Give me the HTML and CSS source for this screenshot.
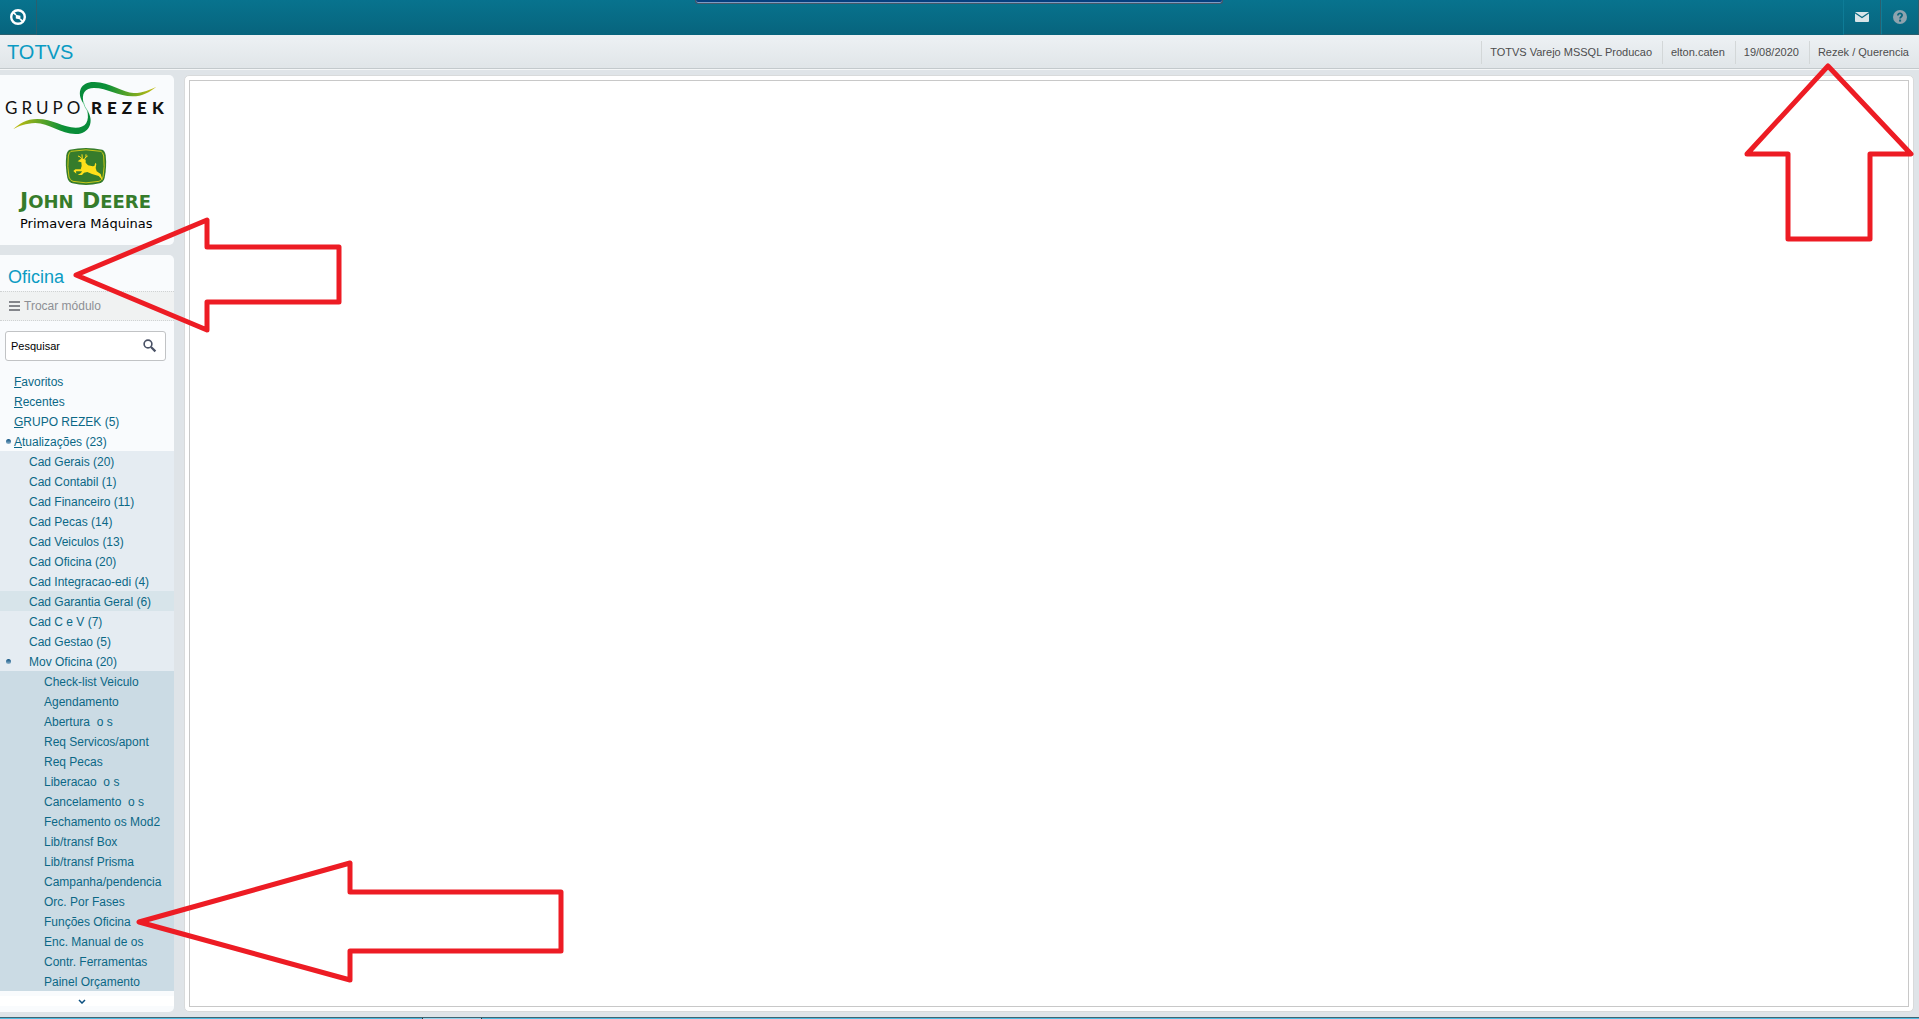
FILE: index.html
```html
<!DOCTYPE html>
<html lang="pt-br">
<head>
    <meta charset="UTF-8">
    <meta name="viewport" content="width=device-width, initial-scale=1.0">
    <title>TOTVS - Oficina</title>
    <link rel="stylesheet" href="styles.css">
</head>
<body>
    <header class="topbar">
        <button class="top-btn top-btn-home" aria-label="Menu">
            <svg width="16" height="16" viewBox="0 0 16 16">
                <circle cx="8" cy="8" r="6.8" fill="none" stroke="#fff" stroke-width="2.4"/>
                <path d="M5.8 5.8 L10.4 6.8 L10.4 10.4 L5.8 9.4 Z" fill="#fff"/>
                <path d="M3.4 3.6 L6 5.8 M10.2 10.2 L12.6 12.4" stroke="#fff" stroke-width="1.6"/>
            </svg>
        </button>
        <div class="remote-tab"></div>
        <div class="top-actions">
            <button class="top-btn" aria-label="Mensagens">
                <svg width="14" height="10" viewBox="0 0 14 10">
                    <rect width="14" height="10" rx="1" fill="#d9e4e8"/>
                    <path d="M0 .8 L7 5.6 L14 .8" fill="none" stroke="#0a6a83" stroke-width="1.2"/>
                </svg>
            </button>
            <button class="top-btn" aria-label="Ajuda">
                <svg width="14" height="14" viewBox="0 0 14 14">
                    <circle cx="7" cy="7" r="7" fill="#8fa3ae"/>
                    <path d="M4.9 5.4 C4.9 2.6 9.2 2.8 9.1 5.3 C9.1 6.7 7.1 6.8 7.1 8.6" fill="none" stroke="#0a667e" stroke-width="1.8"/>
                    <rect x="6.1" y="9.6" width="2" height="2" fill="#0a667e"/>
                </svg>
            </button>
        </div>
    </header>

    <div class="titlebar">
        <h1>TOTVS</h1>
        <ul class="session">
            <li>TOTVS Varejo MSSQL Producao</li>
            <li>elton.caten</li>
            <li>19/08/2020</li>
            <li>Rezek / Querencia</li>
        </ul>
    </div>

    <div class="page">
        <aside class="sidebar">
            <div class="panel logo-panel">
                <svg width="174" height="170" viewBox="0 0 174 170">
                    <defs>
                        <linearGradient id="ribbonTop" x1="0" x2="1">
                            <stop offset="0" stop-color="#078a3b"/>
                            <stop offset=".35" stop-color="#0b9038"/>
                            <stop offset="1" stop-color="#c9bd10"/>
                        </linearGradient>
                        <linearGradient id="ribbonBottom" x1="0" x2="1">
                            <stop offset="0" stop-color="#c9bd10"/>
                            <stop offset=".65" stop-color="#0b9038"/>
                            <stop offset="1" stop-color="#078a3b"/>
                        </linearGradient>
                    </defs>
                    <text class="logo-grupo" x="5" y="39">GRUPO</text>
                    <text class="logo-rezek" x="91" y="39">REZEK</text>
                    <!-- ribbons and deer are drawn on a grid of thirds -->
                    <g transform="scale(.33333) translate(0 -225)">
                        <path d="M252 313 C226 276 244 246 280 246 C325 244 372 280 402 279 C430 279 450 269 469 260 C449 276 428 289 397 289 C356 289 322 264 282 264 C256 264 242 280 252 313 Z" fill="url(#ribbonTop)"/>
                        <path d="M261 329 C284 363 270 401 228 402 C184 403 147 369 106 369 C77 370 58 378 40 387 C59 371 78 357 112 357 C158 357 190 383 227 383 C257 383 270 364 261 329 Z" fill="url(#ribbonBottom)"/>
                        <path d="M250 306 Q252 319 264 335" fill="none" stroke="#7ccf9f" stroke-width="3"/>
                        <path d="M209 449 Q258 439 307 449 Q315 452 317 466 Q321 500 314 533 Q311 546 299 550 Q258 560 217 550 Q205 546 202 533 Q195 500 199 466 Q201 452 209 449 Z" fill="#367c2b"/>
                        <path d="M213 454 Q258 445 303 454 Q309 457 311 468 Q315 500 309 531 Q306 541 297 544 Q258 553 219 544 Q210 541 207 531 Q201 500 205 468 Q207 457 213 454 Z" fill="none" stroke="#c9c91a" stroke-width="3"/>
                        <path d="M233 484 L241 478 L250 476 L257 479 L257 488 L264 496 L278 499 L283 498 L286 488 L289 492 L287 504 L290 514 L302 522 L308 541 L296 528 L276 522 L262 516 L252 518 L246 525 L233 525 L243 519 L246 514 L228 514 L229 521 L220 513 L226 508 L242 508 L245 498 L244 487 Z" fill="#ffdf1a"/>
                        <path d="M246 478 L241 471 L234 468 M247 477 L246 463 M253 478 L258 470 L258 463 M257 472 L263 468" fill="none" stroke="#ffdf1a" stroke-width="3"/>
                    </g>
                    <text class="logo-deere" x="20" y="133"><tspan class="cap">J</tspan>OHN</text>
                    <text class="logo-deere" x="82" y="133"><tspan class="cap">D</tspan>EERE</text>
                    <text class="logo-branch" x="20" y="153">Primavera Máquinas</text>
                </svg>
            </div>

            <div class="panel menu-panel">
                <h2>Oficina</h2>
                <button class="switch-module">
                    <svg width="11" height="10" viewBox="0 0 11 10">
                        <path d="M0 1h11M0 5h11M0 9h11" stroke="#84868b" stroke-width="2"/>
                    </svg>
                    Trocar módulo
                </button>
                <div class="search">
                    <input type="text" value="Pesquisar" aria-label="Pesquisar">
                    <svg width="14" height="14" viewBox="0 0 14 14">
                        <circle cx="5" cy="5" r="3.9" fill="none" stroke="#4a5266" stroke-width="1.6"/>
                        <path d="M8 8 L12.4 12.4" stroke="#4a5266" stroke-width="2.2"/>
                    </svg>
                </div>
                <nav>
                    <ul class="menu">
                        <li><a href="#"><u>F</u>avoritos</a></li>
                        <li><a href="#"><u>R</u>ecentes</a></li>
                        <li><a href="#"><u>G</u>RUPO REZEK (5)</a></li>
                        <li>
                            <a href="#" class="open"><u>A</u>tualizações (23)</a>
                            <ul class="submenu">
                                <li><a href="#">Cad Gerais (20)</a></li>
                                <li><a href="#">Cad Contabil (1)</a></li>
                                <li><a href="#">Cad Financeiro (11)</a></li>
                                <li><a href="#">Cad Pecas (14)</a></li>
                                <li><a href="#">Cad Veiculos (13)</a></li>
                                <li><a href="#">Cad Oficina (20)</a></li>
                                <li><a href="#">Cad Integracao-edi (4)</a></li>
                                <li><a href="#" class="active">Cad Garantia Geral (6)</a></li>
                                <li><a href="#">Cad C e V (7)</a></li>
                                <li><a href="#">Cad Gestao (5)</a></li>
                                <li>
                                    <a href="#" class="open">Mov Oficina (20)</a>
                                    <ul class="routines">
                                        <li><a href="#">Check-list Veiculo</a></li>
                                        <li><a href="#">Agendamento</a></li>
                                        <li><a href="#">Abertura&nbsp; o s</a></li>
                                        <li><a href="#">Req Servicos/apont</a></li>
                                        <li><a href="#">Req Pecas</a></li>
                                        <li><a href="#">Liberacao&nbsp; o s</a></li>
                                        <li><a href="#">Cancelamento&nbsp; o s</a></li>
                                        <li><a href="#">Fechamento os Mod2</a></li>
                                        <li><a href="#">Lib/transf Box</a></li>
                                        <li><a href="#">Lib/transf Prisma</a></li>
                                        <li><a href="#">Campanha/pendencia</a></li>
                                        <li><a href="#">Orc. Por Fases</a></li>
                                        <li><a href="#">Funções Oficina</a></li>
                                        <li><a href="#">Enc. Manual de os</a></li>
                                        <li><a href="#">Contr. Ferramentas</a></li>
                                        <li><a href="#">Painel Orçamento</a></li>
                                    </ul>
                                </li>
                            </ul>
                        </li>
                    </ul>
                </nav>
                <button class="scroll-down" aria-label="Mais itens">
                    <svg width="8" height="5" viewBox="0 0 8 5">
                        <path d="M1 1 L4 4 L7 1" fill="none" stroke="#0a4f80" stroke-width="1.5"/>
                    </svg>
                </button>
            </div>
        </aside>

        <main class="workspace">
            <div class="workspace-inner"></div>
        </main>
    </div>

    <footer class="bottombar"><div class="bottom-tab"></div></footer>

    <!-- arrows over the screen -->
    <svg class="arrow arrow-branch" width="172" height="180" viewBox="0 0 172 180">
        <path d="M85 4 L168 92 H127 V177 H45 V92 H4 Z"/>
    </svg>
    <svg class="arrow arrow-module" width="270" height="118" viewBox="0 0 270 118">
        <path d="M4 59 L135 4 V31 H267 V86 H135 V114 Z"/>
    </svg>
    <svg class="arrow arrow-routine" width="430" height="126" viewBox="0 0 430 126">
        <path d="M4 63 L215 4 V33 H426 V92 H215 V121 Z"/>
    </svg>
</body>
</html>
```
FILE: styles.css
```css
* {
    box-sizing: border-box;
}
body {
    margin: 0;
    min-height: 100vh;
    display: flex;
    flex-direction: column;
    position: relative;
    font-family: "Liberation Sans", Arial, sans-serif;
    font-size: 12px;
    background-color: #dfe4e8;
}
h1, h2, ul {
    margin: 0;
    padding: 0;
    font-weight: normal;
}
ul {
    list-style: none;
}
button {
    border: none;
    padding: 0;
    background: none;
    font-family: inherit;
    cursor: pointer;
}

/* top bar */
.topbar {
    display: flex;
    justify-content: space-between;
    height: 35px;
    position: relative;
    background: linear-gradient(#08738e, #07647d);
}
.top-btn {
    width: 38px;
    height: 35px;
    display: flex;
    align-items: center;
    justify-content: center;
    border-left: 1px solid #0e7c97;
    border-right: 1px solid #2b5f6e;
    border-bottom: 1px solid #2b5f6e;
}
.top-btn-home {
    width: 37px;
    border-left: none;
}
.top-actions {
    display: flex;
}
.remote-tab {
    position: absolute;
    top: 0;
    left: 695px;
    right: 696px;
    height: 4px;
    background-color: #06407f;
    border: 1px solid #45596a;
    border-top: none;
    border-radius: 0 0 3px 3px;
    box-shadow: inset 0 -1px 0 #7f9cc4;
}

/* title bar */
.titlebar {
    display: flex;
    justify-content: space-between;
    align-items: center;
    height: 35px;
    padding-left: 7px;
    background: linear-gradient(#edf1f4, #e0e5e8);
    border-bottom: 1px solid #f4f6f7;
    box-shadow: inset 0 -1px 0 #c3c9cc;
}
.titlebar h1 {
    font-size: 20px;
    line-height: 32px;
    color: #0b9bc3;
}
.session {
    display: flex;
    font-size: 11px;
    color: #4d4d4d;
}
.session li {
    padding: 0 10px 0 8px;
    line-height: 23px;
    border-left: 1px solid #d3d7d8;
}

/* content */
.page {
    flex: 1;
    display: flex;
    gap: 10px;
    padding: 5px 5px 5px 0;
}
.sidebar {
    width: 174px;
    flex-shrink: 0;
    display: flex;
    flex-direction: column;
    gap: 10px;
}
.panel {
    background-color: #f9fbfd;
    border-radius: 0 5px 5px 0;
    overflow: hidden;
}
.logo-panel svg {
    display: block;
}
.logo-grupo, .logo-rezek {
    font-family: Lato, sans-serif;
    font-size: 17px;
    letter-spacing: 4px;
    fill: #111;
}
.logo-rezek {
    font-weight: 900;
    letter-spacing: 5px;
}
.logo-deere {
    font-family: "DejaVu Sans", sans-serif;
    font-size: 18px;
    font-weight: bold;
    fill: #367c2b;
}
.logo-deere .cap {
    font-size: 22px;
}
.logo-branch {
    font-family: "DejaVu Sans", Verdana, sans-serif;
    font-size: 13px;
    fill: #000;
}
.menu-panel {
    flex: 1;
}
.menu-panel h2 {
    height: 36px;
    padding: 2px 8px 0;
    font-size: 18px;
    line-height: 40px;
    color: #0b9bc3;
}
.switch-module {
    display: flex;
    align-items: center;
    gap: 4px;
    width: 100%;
    height: 30px;
    padding: 0 9px;
    font-size: 12px;
    color: #8d8f94;
    background-color: #f0f2f2;
    border-top: 1px dotted #cfd2d3;
    border-bottom: 1px dotted #cfd2d3;
}
.search {
    display: flex;
    align-items: center;
    height: 30px;
    margin: 10px 8px 10px 5px;
    padding: 0 8px 0 5px;
    background-color: #fff;
    border: 1px solid #c1c3c5;
    border-radius: 3px;
}
.search input {
    flex: 1;
    min-width: 0;
    padding: 0;
    border: none;
    outline: none;
    background: none;
    font-family: inherit;
    font-size: 11px;
    color: #000;
}
.menu a {
    display: block;
    height: 20px;
    padding-left: 14px;
    line-height: 22px;
    white-space: nowrap;
    color: #0b6886;
    text-decoration: none;
    position: relative;
}
.menu .submenu a {
    padding-left: 29px;
}
.menu .routines a {
    padding-left: 44px;
}
.menu a.active {
    background-color: #d7e4ea;
}
.menu a.open::before {
    content: "";
    position: absolute;
    left: 6px;
    top: 8px;
    width: 5px;
    height: 5px;
    border-radius: 50%;
    background: linear-gradient(#0a4f80, #8fb4cc);
}
.submenu {
    background-color: #e5ecf2;
}
.routines {
    background-color: #cbdbe4;
}
.scroll-down {
    display: flex;
    align-items: center;
    justify-content: center;
    width: 100%;
    height: 10px;
    margin: 5px 0 6px;
    padding-right: 10px;
    background-color: #fff;
}
.workspace {
    flex: 1;
    display: flex;
    padding: 4px;
    background-color: #fff;
    border: 1px solid #d8dadb;
    border-radius: 5px;
}
.workspace-inner {
    flex: 1;
    border: 1px solid #c8c8c8;
}

/* bottom edge */
.bottombar {
    height: 2px;
    padding-left: 422px;
    background-color: #50bbe0;
    border-top: 1px solid #3f6573;
}
.bottom-tab {
    width: 60px;
    height: 1px;
    background-color: #93d4ee;
    border-left: 1px solid #26343a;
    border-right: 1px solid #26343a;
}

/* arrows */
.arrow {
    position: absolute;
    pointer-events: none;
    fill: none;
    stroke: #ed1c24;
    stroke-width: 5;
    stroke-linejoin: round;
}
.arrow-branch {
    top: 62px;
    right: 4px;
}
.arrow-module {
    top: 216px;
    left: 72px;
}
.arrow-routine {
    top: 859px;
    left: 135px;
}
```
